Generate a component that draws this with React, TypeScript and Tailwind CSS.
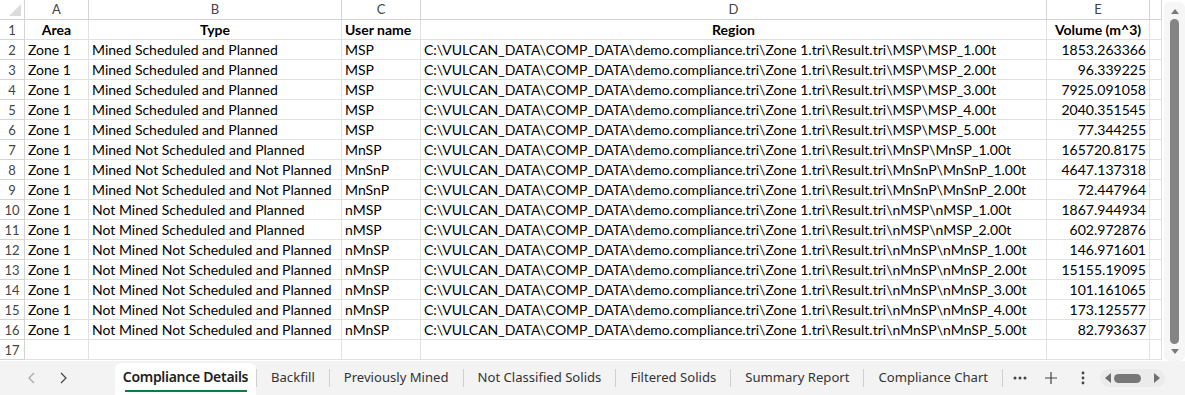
const rows: [string, string, string, string, string][] = [
  ['Zone 1', 'Mined Scheduled and Planned', 'MSP', 'MSP\\MSP_1.00t', '1853.263366'],
  ['Zone 1', 'Mined Scheduled and Planned', 'MSP', 'MSP\\MSP_2.00t', '96.339225'],
  ['Zone 1', 'Mined Scheduled and Planned', 'MSP', 'MSP\\MSP_3.00t', '7925.091058'],
  ['Zone 1', 'Mined Scheduled and Planned', 'MSP', 'MSP\\MSP_4.00t', '2040.351545'],
  ['Zone 1', 'Mined Scheduled and Planned', 'MSP', 'MSP\\MSP_5.00t', '77.344255'],
  ['Zone 1', 'Mined Not Scheduled and Planned', 'MnSP', 'MnSP\\MnSP_1.00t', '165720.8175'],
  ['Zone 1', 'Mined Not Scheduled and Not Planned', 'MnSnP', 'MnSnP\\MnSnP_1.00t', '4647.137318'],
  ['Zone 1', 'Mined Not Scheduled and Not Planned', 'MnSnP', 'MnSnP\\MnSnP_2.00t', '72.447964'],
  ['Zone 1', 'Not Mined Scheduled and Planned', 'nMSP', 'nMSP\\nMSP_1.00t', '1867.944934'],
  ['Zone 1', 'Not Mined Scheduled and Planned', 'nMSP', 'nMSP\\nMSP_2.00t', '602.972876'],
  ['Zone 1', 'Not Mined Not Scheduled and Planned', 'nMnSP', 'nMnSP\\nMnSP_1.00t', '146.971601'],
  ['Zone 1', 'Not Mined Not Scheduled and Planned', 'nMnSP', 'nMnSP\\nMnSP_2.00t', '15155.19095'],
  ['Zone 1', 'Not Mined Not Scheduled and Planned', 'nMnSP', 'nMnSP\\nMnSP_3.00t', '101.161065'],
  ['Zone 1', 'Not Mined Not Scheduled and Planned', 'nMnSP', 'nMnSP\\nMnSP_4.00t', '173.125577'],
  ['Zone 1', 'Not Mined Not Scheduled and Planned', 'nMnSP', 'nMnSP\\nMnSP_5.00t', '82.793637'],
];

const prefix = 'C:\\VULCAN_DATA\\COMP_DATA\\demo.compliance.tri\\Zone 1.tri\\Result.tri\\';

const tabs = ['Backfill', 'Previously Mined', 'Not Classified Solids', 'Filtered Solids', 'Summary Report', 'Compliance Chart'];

const grid = 'grid grid-cols-[25px_64px_253px_79px_626px_103px_1fr]';
const cell = 'h-5 border-r border-b border-[#e1e1e1] px-[3px] leading-[20px] whitespace-nowrap overflow-hidden';
const hdr = 'h-5 border-r border-b border-[#d4d4d4] text-center text-[13px] leading-[19px] text-[#444]';

function RowNum({ n }: { n: number }) {
  return <div className="h-5 border-r border-b border-[#d4d4d4] text-center text-[13px] leading-[20px] text-[#444]">{n}</div>;
}

export default function App() {
  return (
    <div className="w-[1185px] h-[395px] bg-white flex flex-col overflow-hidden font-['Lato','Liberation_Sans',sans-serif] text-black">
      <div className="flex h-[361px]">
        <div className="flex-1 text-[14px]">
          <div className={grid}>
            <div className="h-5 border-r border-b border-[#d4d4d4] flex items-end justify-end p-[3px]">
              <svg width="12" height="12" viewBox="0 0 12 12"><path d="M12 0 L12 12 L0 12 Z" fill="#dcdcdc" /></svg>
            </div>
            {['A', 'B', 'C', 'D', 'E', ''].map((c, i) => (
              <div key={i} className={hdr}>{c}</div>
            ))}

            <RowNum n={1} />
            <div className={`${cell} text-center font-bold`}>Area</div>
            <div className={`${cell} text-center font-bold`}>Type</div>
            <div className={`${cell} font-bold`}>User name</div>
            <div className={`${cell} text-center font-bold`}>Region</div>
            <div className={`${cell} text-center font-bold`}>Volume (m^3)</div>
            <div className={cell} />

            {rows.map((r, i) => (
              <div key={i} className="contents">
                <RowNum n={i + 2} />
                <div className={cell}>{r[0]}</div>
                <div className={cell}>{r[1]}</div>
                <div className={cell}>{r[2]}</div>
                <div className={cell}>{prefix + r[3]}</div>
                <div className={`${cell} text-right`}>{r[4]}</div>
                <div className={cell} />
              </div>
            ))}

            <RowNum n={17} />
            {[0, 1, 2, 3, 4, 5].map((k) => (
              <div key={k} className={cell} />
            ))}
          </div>
        </div>

        <div className="w-[21px] bg-[#f6f6f6] rounded-[6px] mt-[2px] ml-[2px] flex flex-col items-center py-[5px]">
          <svg width="10" height="8" viewBox="0 0 10 8"><path d="M1 7 L5 2 L9 7 Z" fill="#7a7a7a" /></svg>
          <div className="w-[9px] flex-1 my-[4px] rounded-full bg-[#848484]" />
          <svg width="10" height="8" viewBox="0 0 10 8"><path d="M1 1 L9 1 L5 6 Z" fill="#7a7a7a" /></svg>
        </div>
      </div>

      <div className="flex-1 bg-[#f3f3f3] flex items-end text-[13.1px] text-[#333] font-['Noto_Sans','Lato',sans-serif]">
        <div className="flex items-center h-full w-[115px] pl-[26px] gap-[19px] shrink-0">
          <svg width="12" height="14" viewBox="0 0 12 14"><path d="M8 2 L3 7 L8 12" fill="none" stroke="#a6a6a6" strokeWidth="1.2" /></svg>
          <svg width="12" height="14" viewBox="0 0 12 14"><path d="M4 2 L9 7 L4 12" fill="none" stroke="#444" strokeWidth="1.2" /></svg>
        </div>
        <div className="h-[32px] bg-white rounded-t-[6px] flex flex-col items-center justify-center w-[141px] shrink-0">
          <span className="font-semibold text-[#222] whitespace-nowrap leading-5 text-[14px] tracking-[-0.3px]">Compliance Details</span>
          <div className="h-[2px] w-[122px] bg-[#107c41] mt-[3px]" />
        </div>
        <div className="flex items-center h-full">
          {tabs.map((t) => (
            <div key={t} className="flex items-center">
              <div className="w-px h-[18px] bg-[#cfcfcf]" />
              <span className="px-[14px] whitespace-nowrap">{t}</span>
            </div>
          ))}
          <div className="w-px h-[18px] bg-[#cfcfcf]" />
        </div>
        <div className="flex items-center h-full ml-auto pr-[20px]">
          <svg width="14" height="4" viewBox="0 0 14 4">
            <circle cx="2" cy="2" r="1.5" fill="#444" />
            <circle cx="7" cy="2" r="1.5" fill="#444" />
            <circle cx="12" cy="2" r="1.5" fill="#444" />
          </svg>
          <svg className="ml-[17px]" width="14" height="14" viewBox="0 0 14 14"><path d="M7 1 V13 M1 7 H13" stroke="#444" strokeWidth="1.2" /></svg>
          <svg className="ml-[23px]" width="4" height="14" viewBox="0 0 4 14">
            <circle cx="2" cy="2" r="1.4" fill="#444" />
            <circle cx="2" cy="7" r="1.4" fill="#444" />
            <circle cx="2" cy="12" r="1.4" fill="#444" />
          </svg>
          <div className="ml-[15px] w-[65px] h-[18px] rounded-full bg-[#ebebeb] flex items-center justify-between px-[5px]">
            <svg width="6" height="10" viewBox="0 0 6 10"><path d="M6 0 V10 L0 5 Z" fill="#6e6e6e" /></svg>
            <div className="w-[27px] h-[9px] rounded-full bg-[#777]" />
            <div className="w-[8px]" />
            <svg width="6" height="10" viewBox="0 0 6 10"><path d="M0 0 V10 L6 5 Z" fill="#6e6e6e" /></svg>
          </div>
        </div>
      </div>
    </div>
  );
}
